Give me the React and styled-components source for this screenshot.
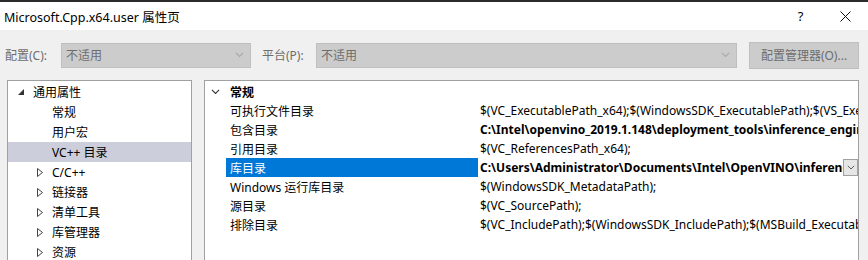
import React from "react";
import styled, { createGlobalStyle } from "styled-components";

const GlobalStyle = createGlobalStyle`
  html, body { margin: 0; padding: 0; }
  body {
    width: 868px;
    height: 260px;
    overflow: hidden;
    background: #f0f0f0;
    font-family: "Noto Sans", "Noto Sans CJK SC", sans-serif;
    font-size: 12px;
    color: #000;
  }
`;

const Window = styled.div`
  width: 868px;
  height: 260px;
  display: flex;
  flex-direction: column;
  border-top: 2px solid #2b2b2b;
  box-sizing: border-box;
  overflow: hidden;
`;

const TitleBar = styled.div`
  height: 28px;
  flex: none;
  background: #fff;
  display: flex;
  align-items: center;
  padding-left: 4px;
  font-size: 12.5px;
`;

const Title = styled.div`
  flex: 1;
`;

const TitleButton = styled.div`
  width: 45px;
  display: flex;
  justify-content: center;
  align-items: center;
  font-size: 13px;
`;

const ConfigRow = styled.div`
  display: flex;
  flex: none;
  align-items: center;
  height: 50px;
  padding: 0 10px 0 5px;
  box-sizing: border-box;
`;

const Label = styled.span`
  color: #6d6d6d;
  width: ${(p) => p.$w}px;
  flex: none;
`;

const Select = styled.div`
  width: ${(p) => p.$w}px;
  height: 25px;
  box-sizing: border-box;
  background: #cccccc;
  border: 1px solid #bfbfbf;
  display: flex;
  align-items: center;
  padding: 0 6px 0 4px;
  color: #6d6d6d;
  margin-right: ${(p) => p.$mr}px;
  flex: none;
  span { flex: 1; }
`;

const Button = styled.div`
  width: 110px;
  height: 27px;
  flex: none;
  box-sizing: border-box;
  background: #cccccc;
  border: 1px solid #bfbfbf;
  color: #6d6d6d;
  display: flex;
  align-items: center;
  justify-content: center;
`;

const Body = styled.div`
  flex: 1;
  min-height: 0;
  display: flex;
  padding: 0 9px 0 7px;
  gap: 12px;
`;

const TreePanel = styled.div`
  width: 185px;
  flex: none;
  background: #fff;
  border: 1px solid #a0a0a0;
  border-bottom: none;
  box-sizing: border-box;
  padding-top: 1px;
`;

const TreeItem = styled.div`
  height: 20px;
  display: flex;
  align-items: center;
  white-space: nowrap;
  padding-left: ${(p) => p.$indent}px;
  background: ${(p) => (p.$selected ? "#cccedb" : "transparent")};
`;

const Arrow = styled.span`
  width: 15px;
  display: flex;
  align-items: center;
  flex: none;
`;

const GridPanel = styled.div`
  flex: 1;
  min-width: 0;
  background: #fff;
  border: 1px solid #a0a0a0;
  border-bottom: none;
  box-sizing: border-box;
  padding-top: 1px;
  overflow: hidden;
`;

const GridRow = styled.div`
  height: 19px;
  display: flex;
  align-items: center;
  min-width: 0;
`;

const Gutter = styled.div`
  width: 21px;
  flex: none;
  display: flex;
  justify-content: center;
`;

const NameCell = styled.div`
  width: 252px;
  flex: none;
  height: 100%;
  display: flex;
  align-items: center;
  padding-left: 4px;
  box-sizing: border-box;
  white-space: nowrap;
  font-weight: ${(p) => (p.$bold ? 700 : 400)};
  background: ${(p) => (p.$selected ? "#0078d7" : "transparent")};
  color: ${(p) => (p.$selected ? "#fff" : "#000")};
`;

const ValueCell = styled.div`
  flex: 1;
  min-width: 0;
  height: 100%;
  display: flex;
  align-items: center;
  padding-left: 2px;
  white-space: nowrap;
  overflow: hidden;
  font-weight: ${(p) => (p.$bold ? 700 : 400)};
  span { flex: 1; min-width: 0; overflow: hidden; }
`;

const DropButton = styled.div`
  width: 15px;
  height: 17px;
  flex: none;
  box-sizing: border-box;
  border: 1px solid #a0a0a0;
  background: #e6e6e6;
  display: flex;
  align-items: center;
  justify-content: center;
`;

const Chevron = ({ color = "#888", size = 9 }) => (
  <svg width={size} height={size * 0.6} viewBox="0 0 10 6">
    <path d="M1 1 L5 5 L9 1" fill="none" stroke={color} strokeWidth="1.2" />
  </svg>
);

const Expanded = () => (
  <svg width="6" height="6" viewBox="0 0 6 6">
    <path d="M6 0 L6 6 L0 6 Z" fill="#333" />
  </svg>
);

const Collapsed = () => (
  <svg width="6" height="9" viewBox="0 0 6 9">
    <path d="M0.5 0.5 L5.5 4.5 L0.5 8.5 Z" fill="none" stroke="#444" strokeWidth="1" />
  </svg>
);

const tree = [
  { label: "通用属性", indent: 10, arrow: "open" },
  { label: "常规", indent: 44 },
  { label: "用户宏", indent: 44 },
  { label: "VC++ 目录", indent: 44, selected: true },
  { label: "C/C++", indent: 29, arrow: "closed" },
  { label: "链接器", indent: 29, arrow: "closed" },
  { label: "清单工具", indent: 29, arrow: "closed" },
  { label: "库管理器", indent: 29, arrow: "closed" },
  { label: "资源", indent: 29, arrow: "closed" },
];

const props = [
  { name: "可执行文件目录", value: "$(VC_ExecutablePath_x64);$(WindowsSDK_ExecutablePath);$(VS_ExecutablePath);$(MSBuild_ExecutablePath)" },
  { name: "包含目录", value: "C:\\Intel\\openvino_2019.1.148\\deployment_tools\\inference_engine\\include;$(IncludePath)", bold: true },
  { name: "引用目录", value: "$(VC_ReferencesPath_x64);" },
  { name: "库目录", value: "C:\\Users\\Administrator\\Documents\\Intel\\OpenVINO\\inference_engine\\lib", bold: true, selected: true },
  { name: "Windows 运行库目录", value: "$(WindowsSDK_MetadataPath);" },
  { name: "源目录", value: "$(VC_SourcePath);" },
  { name: "排除目录", value: "$(VC_IncludePath);$(WindowsSDK_IncludePath);$(MSBuild_ExecutablePath);$(VC_LibraryPath_x64)" },
];

export default function App() {
  return (
    <>
      <GlobalStyle />
      <Window>
        <TitleBar>
          <Title>Microsoft.Cpp.x64.user 属性页</Title>
          <TitleButton>?</TitleButton>
          <TitleButton>
            <svg width="11" height="11" viewBox="0 0 11 11">
              <path d="M0.5 0.5 L10.5 10.5 M10.5 0.5 L0.5 10.5" stroke="#111" strokeWidth="1" />
            </svg>
          </TitleButton>
        </TitleBar>
        <ConfigRow>
          <Label $w={56}>配置(C):</Label>
          <Select $w={190} $mr={11}>
            <span>不适用</span>
            <Chevron color="#a8a8a8" />
          </Select>
          <Label $w={54}>平台(P):</Label>
          <Select $w={421} $mr={12}>
            <span>不适用</span>
            <Chevron color="#a8a8a8" />
          </Select>
          <Button>配置管理器(O)...</Button>
        </ConfigRow>
        <Body>
          <TreePanel>
            {tree.map((t) => (
              <TreeItem key={t.label} $indent={t.indent} $selected={t.selected}>
                {t.arrow && (
                  <Arrow>{t.arrow === "open" ? <Expanded /> : <Collapsed />}</Arrow>
                )}
                {t.label}
              </TreeItem>
            ))}
          </TreePanel>
          <GridPanel>
            <GridRow>
              <Gutter>
                <Chevron color="#333" size={9} />
              </Gutter>
              <NameCell $bold>常规</NameCell>
            </GridRow>
            {props.map((p) => (
              <GridRow key={p.name}>
                <Gutter />
                <NameCell $selected={p.selected}>{p.name}</NameCell>
                <ValueCell $bold={p.bold}>
                  <span>{p.value}</span>
                  {p.selected && (
                    <DropButton>
                      <Chevron color="#555" size={8} />
                    </DropButton>
                  )}
                </ValueCell>
              </GridRow>
            ))}
          </GridPanel>
        </Body>
      </Window>
    </>
  );
}
